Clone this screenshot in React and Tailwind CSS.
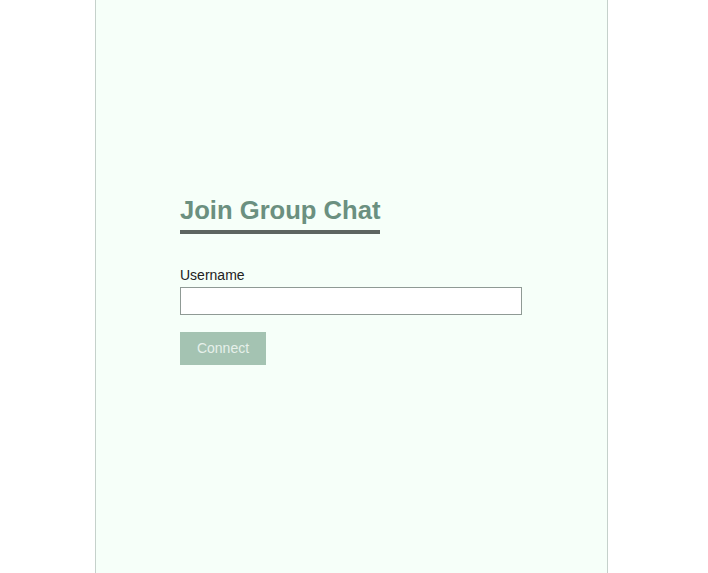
export default function App() {
  return (
    <div className="min-h-screen bg-white font-['Liberation_Sans',Arial,sans-serif]">
      <div className="ml-[95px] flex min-h-screen w-[513px] flex-col border-x border-[#c5d1cb] bg-[#f6fff9] px-[84px] pt-[195px]">
        <h1 className="self-start border-b-4 border-[#5d6561] pb-[5px] text-[25.6px] font-bold leading-[30px] text-[#6b9080]">
          Join Group Chat
        </h1>
        <label className="mt-[31px] text-[14px] leading-[20px] text-[#222]">Username</label>
        <input
          type="text"
          className="mt-[2px] h-[28px] w-[342px] border border-[#8f9a95] bg-white px-2 text-[14px] outline-none"
        />
        <button className="mt-[17px] h-[33px] w-[86px] bg-[#a4c3b2] text-[14px] text-[#e6f0ea]">
          Connect
        </button>
      </div>
    </div>
  );
}
